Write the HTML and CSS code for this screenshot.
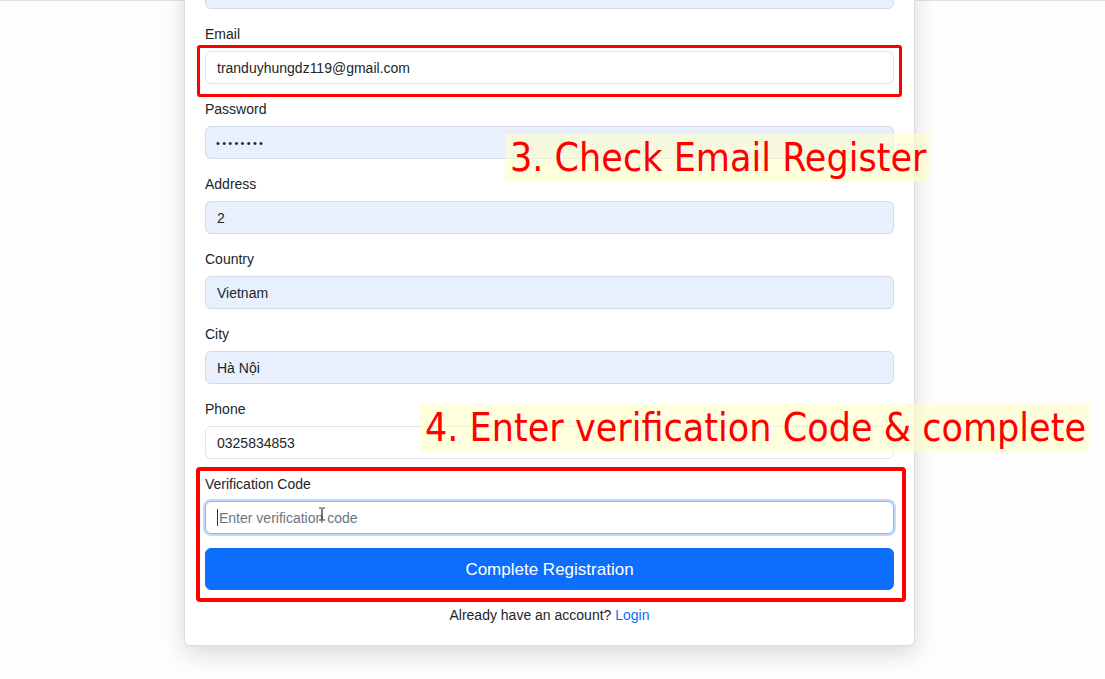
FILE: index.html
```html
<!DOCTYPE html>
<html lang="en">
<head>
<meta charset="utf-8">
<title>Register</title>
<link rel="stylesheet" href="styles.css">
</head>
<body>
<div class="topline"></div>
<main class="page">
  <form class="card">
    <div class="group first">
      <div class="input autofill"></div>
    </div>
    <div class="group">
      <label class="label">Email</label>
      <div class="input">tranduyhungdz119@gmail.com</div>
    </div>
    <div class="group">
      <label class="label">Password</label>
      <div class="input autofill dots">••••••••</div>
    </div>
    <div class="group">
      <label class="label">Address</label>
      <div class="input autofill">2</div>
    </div>
    <div class="group">
      <label class="label">Country</label>
      <div class="input autofill">Vietnam</div>
    </div>
    <div class="group">
      <label class="label">City</label>
      <div class="input autofill">Hà Nội</div>
    </div>
    <div class="group">
      <label class="label">Phone</label>
      <div class="input">0325834853</div>
    </div>
    <div class="group last">
      <label class="label">Verification Code</label>
      <div class="input focus"><span class="caret"></span><span class="placeholder">Enter verification code</span>
        <svg class="ibeam" width="8" height="14" viewBox="0 0 8 14"><path d="M1 1h2.5M4.5 1H7M4 1.5v11M1 13h2.5M4.5 13H7" stroke="#222" stroke-width="1.2" fill="none"/></svg>
      </div>
    </div>
    <button type="button" class="btn">Complete Registration</button>
    <p class="foot">Already have an account? <a class="link">Login</a></p>
  </form>
</main>
<div class="mark mark-email"></div>
<div class="mark mark-verify"></div>
<div class="note note-1">3. Check Email Register</div>
<div class="note note-2">4. Enter verification Code &amp; complete</div>
</body>
</html>
```

FILE: styles.css
```css
* { box-sizing: border-box; }
html, body { margin: 0; padding: 0; }
body {
  background: #fdfdfd;
  font-family: "Liberation Sans", Arial, sans-serif;
  color: #212529;
  width: 1105px;
  height: 679px;
  overflow: hidden;
  position: relative;
}
.topline {
  height: 1px;
  background: #e3e3e3;
}
.page {
  display: flex;
}
.card {
  width: 731px;
  margin: -26px 0 0 184px;
  background: #fff;
  border: 1px solid #dcdcdc;
  border-radius: 6px;
  padding: 0 20px 20px;
  box-shadow: 0 8px 22px rgba(0,0,0,0.14);
  display: flex;
  flex-direction: column;
  position: relative;
  z-index: 1;
}
.group {
  display: flex;
  flex-direction: column;
  margin-bottom: 16px;
}
.group.last { margin-bottom: 14px; }
.label {
  font-size: 14px;
  line-height: 18px;
  margin-bottom: 8px;
  color: #212529;
}
.input {
  height: 33px;
  border: 1px solid #dee2e6;
  border-radius: 6px;
  background: #fff;
  padding: 0 11px;
  font-size: 14px;
  line-height: 32px;
  color: #212529;
  position: relative;
}
.input.autofill {
  background: #e8f0fe;
  border-color: #cfdaeb;
}
.input.dots {
  font-size: 11px;
  letter-spacing: 2.3px;
  padding-left: 10px;
}
.input.focus {
  border-color: #86b7fe;
  box-shadow: 0 0 0 2px rgba(13,110,253,0.25);
  display: flex;
  align-items: center;
}
.caret {
  width: 1px;
  height: 17px;
  background: #333;
  margin-right: 1px;
}
.placeholder { color: #6c757d; }
.ibeam {
  position: absolute;
  left: 112px;
  top: 5px;
}
.btn {
  height: 42px;
  border: 1px solid #0d6efd;
  border-radius: 6px;
  background: #0d6efd;
  color: #fff;
  font-family: "Liberation Sans", Arial, sans-serif;
  font-size: 17px;
  padding: 0 0 0 0;
  line-height: 42px;
}
.foot {
  margin: 15px 0 0;
  text-align: center;
  font-size: 14px;
  line-height: 20px;
  color: #212529;
}
.link { color: #0d6efd; text-decoration: none; }

.mark {
  position: absolute;
  border: 3px solid #ff0000;
  border-radius: 3px;
  z-index: 2;
}
.mark-email { left: 197px; top: 45px; width: 705px; height: 52px; }
.mark-verify { left: 196px; top: 467px; width: 710px; height: 135px; border-width: 4px; border-radius: 4px; }

.note {
  position: absolute;
  z-index: 3;
  background: rgba(255, 255, 200, 0.6);
  color: #ff0000;
  font-family: "DejaVu Sans Condensed", "DejaVu Sans", sans-serif;
  font-size: 39px;
  line-height: 48px;
  padding: 0 3px 0 5px;
  white-space: nowrap;
}
.note-1 { left: 505px; top: 134px; }
.note-2 { left: 420px; top: 404px; }
```
